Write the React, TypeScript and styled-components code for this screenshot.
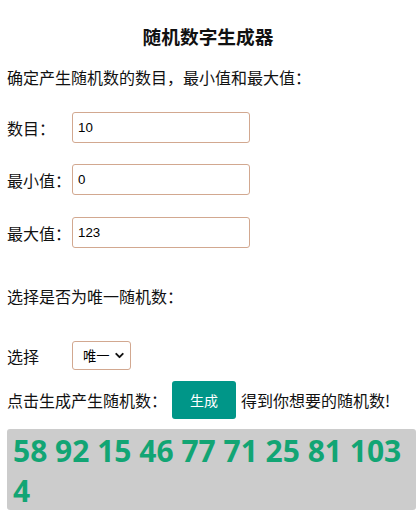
import React, { useState } from "react";
import styled, { createGlobalStyle } from "styled-components";
import { ChevronDown } from "lucide-react";

const GlobalStyle = createGlobalStyle`
  html, body {
    margin: 0;
    padding: 0;
    background: #fff;
  }
  body {
    font-family: "Noto Sans CJK SC", "Noto Sans", sans-serif;
    font-size: 16px;
    color: #111;
  }
`;

const Page = styled.div`
  padding: 0 4px 0 7px;
`;

const Title = styled.h3`
  margin: 24px 0 0;
  padding-right: 7px;
  font-size: 18.7px;
  line-height: 24px;
  font-weight: 700;
  text-align: center;
`;

const Text = styled.p<{ $top: number }>`
  margin: ${(p) => p.$top}px 0 0;
  line-height: 24px;
`;

const Row = styled.div<{ $top: number }>`
  display: flex;
  align-items: center;
  margin-top: ${(p) => p.$top}px;
`;

const Label = styled.span`
  width: 65px;
  flex-shrink: 0;
  line-height: 24px;
`;

const Field = styled.input`
  box-sizing: border-box;
  width: 178px;
  height: 31px;
  padding: 0 5px;
  border: 1px solid #d2a890;
  border-radius: 3px;
  font-family: "Liberation Sans", "Noto Sans CJK SC", sans-serif;
  font-size: 13.3px;
  color: #000;
  outline: none;
`;

const SelectWrap = styled.span`
  position: relative;
  display: inline-flex;
`;

const Select = styled.select`
  box-sizing: border-box;
  appearance: none;
  width: 59px;
  height: 29px;
  padding: 0 0 0 10px;
  border: 1px solid #d2a890;
  border-radius: 3px;
  background: #fff;
  font-family: "Noto Sans CJK SC", sans-serif;
  font-size: 13.3px;
  color: #000;
  outline: none;
`;

const Chevron = styled(ChevronDown)`
  position: absolute;
  right: 5px;
  top: 8px;
  pointer-events: none;
`;

const Button = styled.button`
  box-sizing: border-box;
  width: 64px;
  height: 38px;
  margin: 0 5px;
  border: none;
  border-radius: 3px;
  background: #009688;
  color: #fff;
  font-family: "Noto Sans CJK SC", sans-serif;
  font-size: 14px;
  cursor: pointer;
`;

const Result = styled.div`
  margin-top: 10px;
  padding: 2px 6px 0;
  height: 81px;
  box-sizing: border-box;
  background: #cccccc;
  border-radius: 3px;
  color: #12a574;
  font-family: "Open Sans", "Noto Sans", sans-serif;
  font-weight: 700;
  font-size: 30px;
  line-height: 40px;
`;

const pick = (count: number, min: number, max: number, unique: boolean) => {
  const out: number[] = [];
  let guard = 0;
  while (out.length < count && guard < 10000) {
    guard++;
    const n = min + Math.floor(Math.random() * (max - min + 1));
    if (unique && out.includes(n)) continue;
    out.push(n);
  }
  return out;
};

export default function App() {
  const [count, setCount] = useState("10");
  const [min, setMin] = useState("0");
  const [max, setMax] = useState("123");
  const [mode, setMode] = useState("unique");
  const [nums, setNums] = useState<number[]>([58, 92, 15, 46, 77, 71, 25, 81, 103, 4]);

  const generate = () => {
    setNums(pick(Number(count) || 0, Number(min) || 0, Number(max) || 0, mode === "unique"));
  };

  return (
    <Page>
      <GlobalStyle />
      <Title>随机数字生成器</Title>
      <Text $top={17}>确定产生随机数的数目，最小值和最大值：</Text>
      <Row $top={23}>
        <Label>数目：</Label>
        <Field value={count} onChange={(e) => setCount(e.target.value)} />
      </Row>
      <Row $top={21}>
        <Label>最小值：</Label>
        <Field value={min} onChange={(e) => setMin(e.target.value)} />
      </Row>
      <Row $top={22}>
        <Label>最大值：</Label>
        <Field value={max} onChange={(e) => setMax(e.target.value)} />
      </Row>
      <Text $top={36}>选择是否为唯一随机数：</Text>
      <Row $top={33}>
        <Label>选择</Label>
        <SelectWrap>
          <Select value={mode} onChange={(e) => setMode(e.target.value)}>
            <option value="unique">唯一</option>
            <option value="any">不唯一</option>
          </Select>
          <Chevron size={13} strokeWidth={3.5} color="#111" />
        </SelectWrap>
      </Row>
      <Row $top={11}>
        <span>点击生成产生随机数：</span>
        <Button onClick={generate}>生成</Button>
        <span>得到你想要的随机数!</span>
      </Row>
      <Result>{nums.join(" ")}</Result>
    </Page>
  );
}
